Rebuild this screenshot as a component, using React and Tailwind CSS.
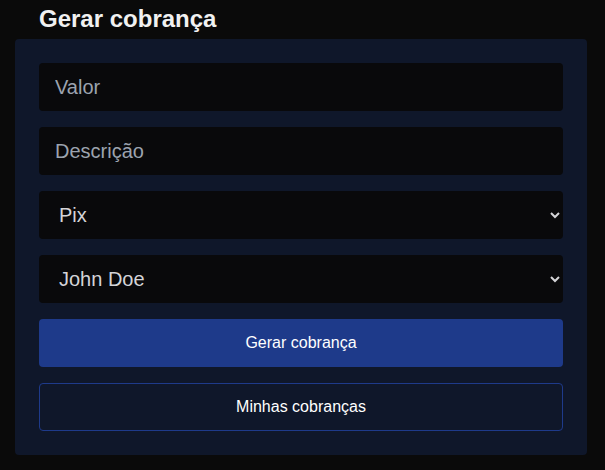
import React from "react";

const field =
  "block h-12 w-full rounded border-0 bg-[#09090b] px-4 text-xl text-[#d4d4d8] outline-none placeholder:text-[#9ca3af]";

export default function App() {
  return (
    <main className="min-h-screen bg-[#0a0a0a] pt-[5px] pr-[18px] pb-[15px] pl-[15px] font-['Liberation_Sans',Arial,sans-serif]">
      <h1 className="mb-[6px] pl-6 text-2xl leading-7 font-bold text-[#f1f1f1]">Gerar cobrança</h1>
      <form
        className="flex flex-col gap-4 rounded bg-[#0f172a] p-6"
        onSubmit={(event) => event.preventDefault()}
      >
        <input className={field} type="text" placeholder="Valor" aria-label="Valor" />
        <input className={field} type="text" placeholder="Descrição" aria-label="Descrição" />
        <select className={field} aria-label="Forma de pagamento" defaultValue="Pix">
          <option>Pix</option>
          <option>Boleto</option>
        </select>
        <select className={field} aria-label="Cliente" defaultValue="John Doe">
          <option>John Doe</option>
        </select>
        <button type="submit" className="h-12 rounded bg-[#1e3a8a] text-base text-white">
          Gerar cobrança
        </button>
        <button type="button" className="h-12 rounded border border-[#1e3a8a] text-base text-white">
          Minhas cobranças
        </button>
      </form>
    </main>
  );
}
